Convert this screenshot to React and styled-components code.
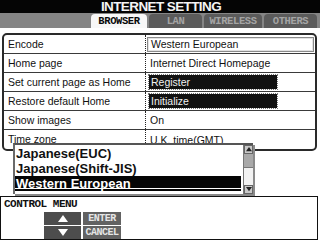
import React from 'react';
import styled, { createGlobalStyle } from 'styled-components';

const GlobalStyle = createGlobalStyle`
  html, body {
    margin: 0;
    padding: 0;
    background: #ffffff;
  }
  * {
    box-sizing: border-box;
  }
`;

const Screen = styled.div`
  position: relative;
  width: 320px;
  height: 240px;
  overflow: hidden;
  display: flex;
  flex-direction: column;
  background: #ffffff;
  font-family: "Liberation Sans", Arial, sans-serif;
  color: #111;
`;

const TitleBar = styled.div`
  height: 13px;
  background: #050505;
  color: #f4f4f4;
  font-weight: bold;
  font-size: 13.5px;
  line-height: 13px;
  letter-spacing: -0.6px;
  text-align: center;
  padding-left: 2px;
`;

const TabRow = styled.div`
  height: 15px;
  background: #858585;
  display: flex;
  align-items: flex-end;
  padding-left: 91px;
  gap: 2px;
`;

const Tab = styled.div`
  width: ${p => p.w}px;
  height: 14px;
  border-radius: 4px 4px 0 0;
  background: ${p => (p.active ? '#f7f7f7' : '#5b5b5b')};
  color: ${p => (p.active ? '#0a0a0a' : '#a4a4a4')};
  font-family: "Liberation Mono", "DejaVu Sans Mono", monospace;
  font-weight: bold;
  font-size: 10.5px;
  line-height: 14px;
  text-align: center;
  letter-spacing: -0.4px;
`;

const Content = styled.div`
  padding: 5px 3px 0 2px;
`;

const Table = styled.div`
  border: 2px solid #2a2a2a;
  border-radius: 5px;
  overflow: hidden;
`;

const Row = styled.div`
  display: grid;
  grid-template-columns: 142px 1fr;
  height: 19px;
  border-bottom: ${p => (p.last ? 'none' : '1px solid #3a3a3a')};
`;

const Label = styled.div`
  border-right: 1px dotted #222;
  font-size: 10.5px;
  line-height: 18px;
  padding-left: 4px;
`;

const Value = styled.div`
  display: flex;
  align-items: center;
  padding-left: 1px;
  font-size: 10.5px;
`;

const PlainText = styled.span`
  padding-left: 3px;
`;

const FieldBox = styled.div`
  flex: 1;
  height: 15px;
  margin-right: 1px;
  border: 1px solid #8a8a8a;
  box-shadow: inset 0 0 0 1px #e2e2e2;
  line-height: 13px;
  padding-left: 3px;
`;

const ActionBox = styled.div`
  width: 128px;
  height: 14px;
  margin-left: 2px;
  background: #111;
  color: #f2f2f2;
  outline: 1px dotted #777;
  line-height: 14px;
  padding-left: 2px;
`;

const ListPopup = styled.div`
  position: absolute;
  left: 13px;
  top: 143px;
  width: 240px;
  height: 51px;
  background: #fff;
  border-top: 2px solid #555;
  border-left: 2px solid #6a6a6a;
  box-shadow: 2px 2px 0 #8a8a8a;
  display: flex;
`;

const ListItems = styled.div`
  flex: 1;
  display: flex;
  flex-direction: column;
  padding-top: 1px;
`;

const ListItem = styled.div`
  height: 15px;
  line-height: 15px;
  font-weight: bold;
  font-size: 13px;
  padding-left: 1px;
  background: ${p => (p.selected ? '#050505' : 'transparent')};
  color: ${p => (p.selected ? '#fff' : '#111')};
  box-shadow: ${p => (p.selected ? 'inset 0 -2px 0 #050505, inset 0 -3px 0 #fff' : 'none')};
  margin-right: 2px;
`;

const ScrollBar = styled.div`
  width: 10px;
  display: flex;
  flex-direction: column;
  background: #e8e8e8;
  border-left: 1px solid #777;
`;

const ScrollButton = styled.div`
  height: 9px;
  background: #c9c9c9;
  border: 1px solid #666;
  display: flex;
  align-items: center;
  justify-content: center;
`;

const ScrollThumb = styled.div`
  height: 13px;
  background: #a9a9a9;
`;

const ScrollTrack = styled.div`
  flex: 1;
  background: #f2f2f2;
  border-top: 1px solid #777;
`;

const Spacer = styled.div`
  flex: 1;
`;

const ControlMenu = styled.div`
  height: 44px;
  margin-right: 2px;
  border: 1px solid #111;
  border-left-width: 1.5px;
  background: #fff;
  padding: 2px 0 0 3px;
`;

const MenuTitle = styled.div`
  font-family: "Liberation Mono", "DejaVu Sans Mono", monospace;
  font-weight: bold;
  font-size: 11px;
  line-height: 10px;
  letter-spacing: -0.5px;
`;

const ButtonGrid = styled.div`
  margin: 3px 0 0 40px;
  display: grid;
  grid-template-columns: 37px 38px;
  grid-auto-rows: 13px;
  gap: 1px 2px;
`;

const ArrowButton = styled.div`
  background: #4d4d4d;
  display: flex;
  align-items: center;
  justify-content: center;
`;

const TextButton = styled.div`
  background: #626262;
  color: #e6e6e6;
  font-family: "Liberation Mono", "DejaVu Sans Mono", monospace;
  font-weight: bold;
  font-size: 10px;
  line-height: 13px;
  text-align: center;
  letter-spacing: -0.5px;
`;

const Triangle = ({ down, size = 10, color = '#fff' }) => (
  <svg width={size} height={size * 0.7} viewBox="0 0 10 7">
    <polygon points={down ? '0,0 10,0 5,7' : '5,0 10,7 0,7'} fill={color} />
  </svg>
);

const rows = [
  { label: 'Encode', kind: 'field', value: 'Western European' },
  { label: 'Home page', kind: 'text', value: 'Internet Direct Homepage' },
  { label: 'Set current page as Home', kind: 'action', value: 'Register' },
  { label: 'Restore default Home', kind: 'action', value: 'Initialize' },
  { label: 'Show images', kind: 'text', value: 'On' },
  { label: 'Time zone', kind: 'text', value: 'U.K. time(GMT)' },
];

const tabs = [
  { name: 'BROWSER', w: 56, active: true },
  { name: 'LAN', w: 53 },
  { name: 'WIRELESS', w: 58 },
  { name: 'OTHERS', w: 53 },
];

const renderValue = row => {
  if (row.kind === 'field') return <FieldBox>{row.value}</FieldBox>;
  if (row.kind === 'action') return <ActionBox>{row.value}</ActionBox>;
  return <PlainText>{row.value}</PlainText>;
};

const App = () => {
  const options = ['Japanese(EUC)', 'Japanese(Shift-JIS)', 'Western European'];

  return (
    <>
      <GlobalStyle />
      <Screen>
        <TitleBar>INTERNET SETTING</TitleBar>
        <TabRow>
          {tabs.map(t => (
            <Tab key={t.name} w={t.w} active={t.active}>
              {t.name}
            </Tab>
          ))}
        </TabRow>

        <Content>
          <Table>
            {rows.map((row, i) => (
              <Row key={row.label} last={i === rows.length - 1}>
                <Label>{row.label}</Label>
                <Value>{renderValue(row)}</Value>
              </Row>
            ))}
          </Table>
        </Content>

        <Spacer />

        <ControlMenu>
          <MenuTitle>CONTROL MENU</MenuTitle>
          <ButtonGrid>
            <ArrowButton>
              <Triangle />
            </ArrowButton>
            <TextButton>ENTER</TextButton>
            <ArrowButton>
              <Triangle down />
            </ArrowButton>
            <TextButton>CANCEL</TextButton>
          </ButtonGrid>
        </ControlMenu>

        {/* encode pull-down list, open over the table */}
        <ListPopup>
          <ListItems>
            {options.map(o => (
              <ListItem key={o} selected={o === 'Western European'}>
                {o}
              </ListItem>
            ))}
          </ListItems>
          <ScrollBar>
            <ScrollButton>
              <Triangle size={6} color="#222" />
            </ScrollButton>
            <ScrollThumb />
            <ScrollTrack />
            <ScrollButton>
              <Triangle down size={6} color="#222" />
            </ScrollButton>
          </ScrollBar>
        </ListPopup>
      </Screen>
    </>
  );
};

export default App;
